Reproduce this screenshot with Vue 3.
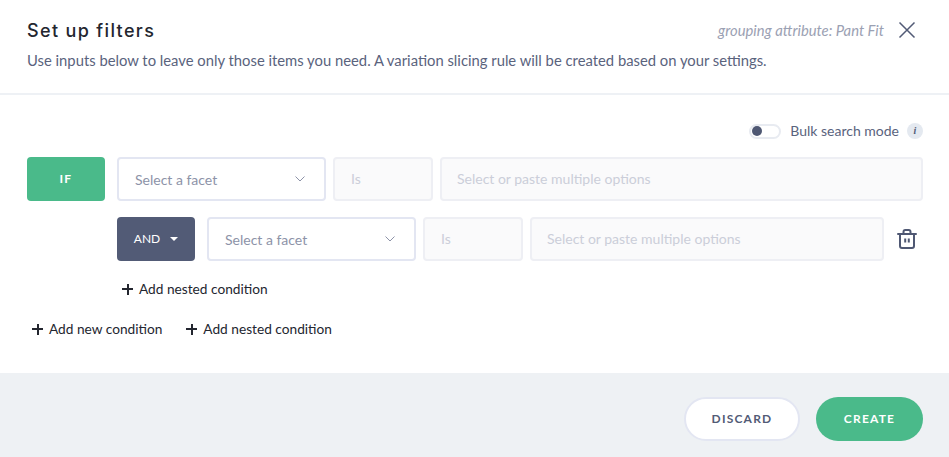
<template>
  <div class="modal">
    <header class="modal-header">
      <div class="title-row">
        <h2>Set up filters</h2>
        <div class="header-right">
          <span class="grouping">grouping attribute: Pant Fit</span>
          <svg class="close" width="18" height="18" viewBox="0 0 18 18">
            <path d="M1.5 1.5L16.5 16.5M16.5 1.5L1.5 16.5" stroke="#525b76" stroke-width="1.5" fill="none" />
          </svg>
        </div>
      </div>
      <p class="subtitle">Use inputs below to leave only those items you need. A variation slicing rule will be created based on your settings.</p>
    </header>

    <section class="modal-body">
      <div class="bulk-row">
        <span class="toggle"><span class="knob"></span></span>
        <span class="bulk-label">Bulk search mode</span>
        <span class="info">i</span>
      </div>

      <div class="condition">
        <div class="if-btn">IF</div>
        <div class="select">
          <span>Select a facet</span>
          <svg width="10" height="6" viewBox="0 0 10 6"><path d="M.5.5L5 5 9.5.5" stroke="#8d93a8" stroke-width="1" fill="none" /></svg>
        </div>
        <div class="is-box">Is</div>
        <div class="options">Select or paste multiple options</div>
      </div>

      <div class="condition nested">
        <div class="and-btn">AND<span class="caret"></span></div>
        <div class="select">
          <span>Select a facet</span>
          <svg width="10" height="6" viewBox="0 0 10 6"><path d="M.5.5L5 5 9.5.5" stroke="#8d93a8" stroke-width="1" fill="none" /></svg>
        </div>
        <div class="is-box">Is</div>
        <div class="options">Select or paste multiple options</div>
        <svg class="trash" width="20" height="20" viewBox="0 0 20 20" fill="none" stroke="#4f5873" stroke-width="2">
          <path d="M1 5h18" stroke-linecap="round" />
          <path d="M6.5 5V3C6.5 1.8 7.2 1 8.2 1h3.6c1 0 1.7.8 1.7 2v2" />
          <path d="M3 5v12c0 1.2.8 2 2 2h10c1.2 0 2-.8 2-2V5" />
          <path d="M8.2 9.5v4M11.8 9.5v4" />
        </svg>
      </div>

      <div class="add-link nested-link"><span class="plus"></span>Add nested condition</div>

      <div class="add-row">
        <div class="add-link"><span class="plus"></span>Add new condition</div>
        <div class="add-link"><span class="plus"></span>Add nested condition</div>
      </div>
    </section>

    <footer class="modal-footer">
      <button class="btn discard">DISCARD</button>
      <button class="btn create">CREATE</button>
    </footer>
  </div>
</template>

<script setup>
</script>

<style>
body {
  background: #fff;
}
</style>

<style scoped>
.modal {
  width: 949px;
  height: 457px;
  display: flex;
  flex-direction: column;
  font-family: Lato, sans-serif;
  background: #fff;
  overflow: hidden;
}

.modal-header {
  height: 95px;
  box-sizing: border-box;
  padding: 20px 33px 0 27px;
  border-bottom: 2px solid #eef1f5;
}

.title-row {
  display: flex;
  justify-content: space-between;
  align-items: center;
  height: 20px;
}

h2 {
  margin: 0;
  font-family: Inter, sans-serif;
  font-size: 18px;
  font-weight: 500;
  letter-spacing: 1.35px;
  color: #23262f;
}

.header-right {
  display: flex;
  align-items: center;
  gap: 14px;
}

.grouping {
  font-size: 14.8px;
  font-style: italic;
  color: #9ba1b3;
}

.subtitle {
  margin: 10px 0 0;
  font-size: 14.8px;
  line-height: 20px;
  color: #5a637d;
}

.modal-body {
  flex: 1;
  padding: 28px 26px 0 27px;
  box-sizing: border-box;
}

.bulk-row {
  display: flex;
  justify-content: flex-end;
  align-items: center;
  height: 16px;
}

.toggle {
  width: 32px;
  height: 15px;
  box-sizing: border-box;
  border: 2px solid #e8ebf1;
  border-radius: 8px;
  display: flex;
  align-items: center;
  margin-right: 9px;
}

.knob {
  width: 10px;
  height: 10px;
  margin-left: 1px;
  border-radius: 50%;
  background: #4f5873;
}

.bulk-label {
  padding-bottom: 1px;
  font-size: 14px;
  color: #5a637d;
}

.info {
  width: 16px;
  height: 16px;
  margin-left: 8px;
  border-radius: 50%;
  background: #e4e9f0;
  color: #525b76;
  font-family: "Liberation Serif", serif;
  font-size: 10px;
  font-style: italic;
  font-weight: 700;
  line-height: 16px;
  text-align: center;
}

.condition {
  display: flex;
  align-items: center;
  gap: 7px;
  height: 44px;
  margin-top: 18px;
}

.condition.nested {
  margin-top: 16px;
  margin-left: 90px;
}

.if-btn,
.and-btn {
  height: 44px;
  width: 78px;
  box-sizing: border-box;
  border-radius: 4px;
  display: flex;
  align-items: center;
  justify-content: center;
  color: #fff;
  font-size: 12px;
}

.if-btn {
  background: #4aba8a;
  margin-right: 5px;
  padding-bottom: 2px;
  font-weight: 700;
  letter-spacing: 1.2px;
}

.and-btn {
  background: #525b76;
  margin-right: 5px;
  padding-bottom: 1px;
}

.caret {
  width: 0;
  height: 0;
  margin-left: 10px;
  border-left: 4px solid transparent;
  border-right: 4px solid transparent;
  border-top: 4px solid #fff;
}

.select {
  width: 209px;
  height: 44px;
  box-sizing: border-box;
  padding: 0 19px 0 16px;
  border: 2px solid #e3e6f2;
  border-radius: 4px;
  display: flex;
  align-items: center;
  justify-content: space-between;
  font-size: 14px;
  color: #8d93a8;
}

.is-box,
.options {
  height: 44px;
  box-sizing: border-box;
  border: 2px solid #eeeff4;
  border-radius: 4px;
  background: #fafafb;
  padding: 0 0 2px 15px;
  display: flex;
  align-items: center;
  font-size: 14px;
  color: #cbced9;
}

.is-box {
  width: 100px;
  padding-left: 16px;
}

.options {
  flex: 1;
}

.trash {
  margin-left: 6px;
  margin-right: 6px;
}

.add-link {
  display: flex;
  align-items: center;
  font-size: 13.7px;
  line-height: 20px;
  color: #23262f;
}

.plus {
  width: 11px;
  height: 11px;
  margin-right: 6px;
  background:
    linear-gradient(#23262f, #23262f) center / 11px 2px no-repeat,
    linear-gradient(#23262f, #23262f) center / 2px 11px no-repeat;
}

.nested-link {
  margin: 18px 0 0 95px;
}

.add-row {
  display: flex;
  gap: 24px;
  margin: 20px 0 0 5px;
}

.modal-footer {
  height: 84px;
  box-sizing: border-box;
  padding: 24px 26px 0 0;
  background: #eef1f4;
  display: flex;
  justify-content: flex-end;
  gap: 16px;
}

.btn {
  height: 44px;
  padding: 0 0 2px;
  border-radius: 22px;
  font-family: Lato, sans-serif;
  font-size: 12px;
  font-weight: 700;
  letter-spacing: 1.2px;
  cursor: pointer;
}

.discard {
  width: 116px;
  background: #fff;
  border: 2px solid #e3e6f2;
  color: #525b76;
}

.create {
  width: 107px;
  background: #4aba8a;
  border: none;
  color: #fff;
}
</style>
